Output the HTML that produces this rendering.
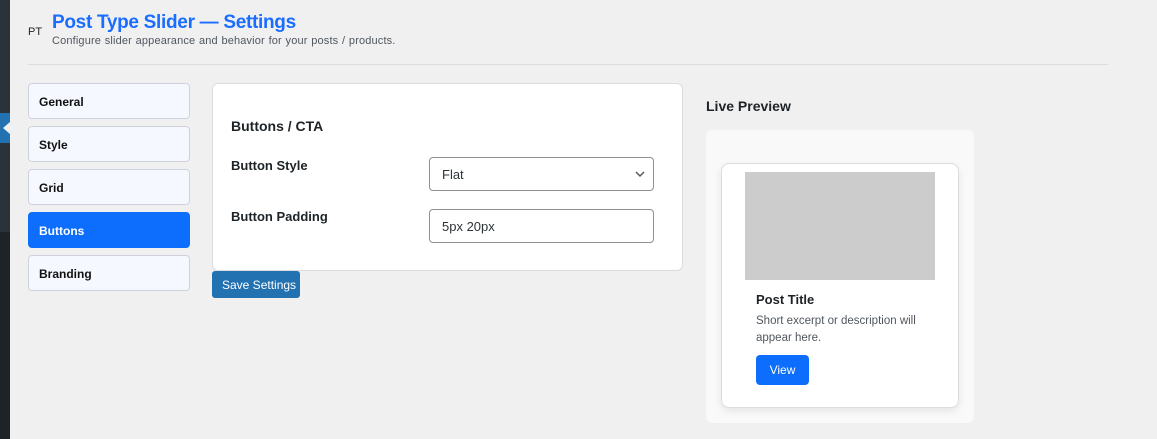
<!DOCTYPE html>
<html><head><meta charset="utf-8"><style>
*{box-sizing:border-box;margin:0;padding:0}
body{width:1157px;height:439px;background:#f0f0f1;font-family:"Liberation Sans",sans-serif;position:relative;overflow:hidden;color:#1d2327}
.a{position:absolute}
.nav{position:absolute;left:28px;width:162px;height:36px;background:#f5f8ff;border:1px solid #cfd2dc;border-radius:4px;font-size:12px;font-weight:bold;padding:11px 0 0 10px;color:#111}
.nav.on{background:#0d6efd;border-color:#0d6efd;color:#fff}
.lbl{font-size:13px;font-weight:bold;color:#1d2327}
.inp{position:absolute;left:429px;width:225px;height:34px;border:1px solid #8c8f94;border-radius:4px;background:#fff;font-size:13px;padding:9px 0 0 12px;color:#2c3338}
</style></head><body>
<div class="a" style="left:0;top:0;width:10px;height:439px;background:#1d2327"></div>
<div class="a" style="left:0;top:0;width:10px;height:232px;background:#2c3338"></div>
<div class="a" style="left:0;top:113px;width:10px;height:30px;background:#2271b1"></div>
<div class="a" style="left:3px;top:122px;width:0;height:0;border-top:6px solid transparent;border-bottom:6px solid transparent;border-right:7px solid #f0f0f1"></div>
<div class="a" style="left:28px;top:26px;font-size:11px;color:#1d2327">PT</div>
<div class="a" style="left:52px;top:12px;font-size:19px;font-weight:bold;color:#1a6dff;letter-spacing:-0.3px">Post Type Slider — Settings</div>
<div class="a" style="left:52px;top:35px;font-size:11px;color:#50575e;letter-spacing:0.15px;word-spacing:0.5px">Configure slider appearance and behavior for your posts / products.</div>
<div class="a" style="left:28px;top:64px;width:1080px;height:1px;background:#dcdcde"></div>
<div class="nav" style="top:83px">General</div>
<div class="nav" style="top:126px">Style</div>
<div class="nav" style="top:169px">Grid</div>
<div class="nav on" style="top:212px">Buttons</div>
<div class="nav" style="top:255px">Branding</div>
<div class="a" style="left:212px;top:83px;width:471px;height:188px;background:#fff;border:1px solid #dcdcde;border-radius:6px"></div>
<div class="a" style="left:231px;top:118px;font-size:14px;font-weight:bold">Buttons / CTA</div>
<div class="a lbl" style="left:231px;top:158px">Button Style</div>
<div class="a lbl" style="left:231px;top:209px">Button Padding</div>
<div class="inp" style="top:157px">Flat<svg style="position:absolute;right:8px;top:13px" width="10" height="7" viewBox="0 0 10 7"><path d="M1 1l4 4 4-4" fill="none" stroke="#50575e" stroke-width="1.5"/></svg></div>
<div class="inp" style="top:209px">5px 20px</div>
<div class="a" style="left:212px;top:271px;width:88px;height:27px;background:#2271b1;border-radius:3px;color:#fff;font-size:12px;padding:7px 0 0 10px">Save Settings</div>
<div class="a" style="left:706px;top:98px;font-size:14px;font-weight:bold">Live Preview</div>
<div class="a" style="left:706px;top:130px;width:268px;height:293px;background:#f9f9f9;border-radius:6px"></div>
<div class="a" style="left:721px;top:163px;width:238px;height:245px;background:#fff;border:1px solid #ddd;border-radius:8px;box-shadow:0 3px 8px rgba(0,0,0,.08)"></div>
<div class="a" style="left:745px;top:172px;width:190px;height:108px;background:#ccc"></div>
<div class="a" style="left:756px;top:292px;font-size:13px;font-weight:bold">Post Title</div>
<div class="a" style="left:756px;top:313px;width:180px;font-size:11.5px;line-height:17px;color:#50575e">Short excerpt or description will appear here.</div>
<div class="a" style="left:756px;top:355px;width:53px;height:30px;background:#0d6efd;border-radius:4px;color:#fff;font-size:12px;text-align:center;line-height:30px">View</div>
</body></html>
